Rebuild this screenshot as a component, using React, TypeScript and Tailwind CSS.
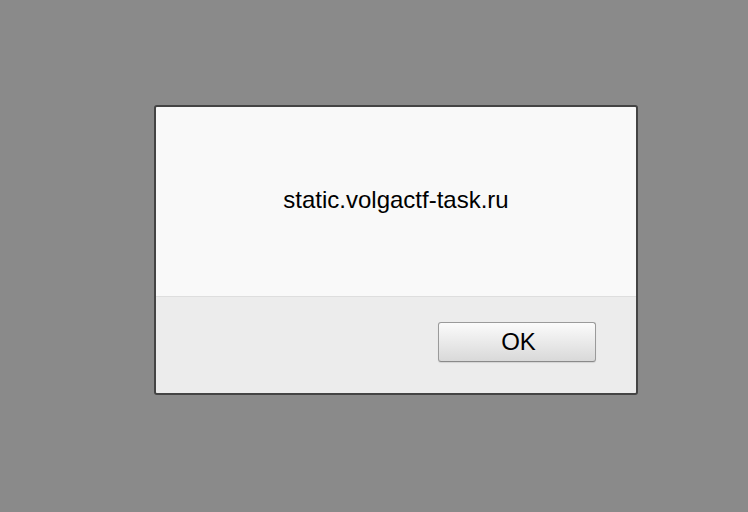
export default function App() {
  return (
    <div className="min-h-[512px] w-full bg-[#8a8a8a] pl-[154px] pt-[105px]" style={{ fontFamily: '"Liberation Sans", Arial, sans-serif' }}>
      <div className="w-[484px] h-[290px] rounded-[3px] border-2 border-[#444] overflow-hidden flex flex-col">
        {/* Message */}
        <div className="h-[190px] bg-[#f9f9f9] border-b border-[#dedede] flex items-center justify-center">
          <p className="text-[24px] text-black pb-[4px]">static.volgactf-task.ru</p>
        </div>

        {/* Actions */}
        <div className="flex-1 bg-[#ececec] flex justify-end items-start pt-[25px] pr-[40px]">
          <button className="w-[158px] h-[40px] rounded-[3px] border border-[#9a9a9a] border-b-[#8a8a8a] bg-gradient-to-b from-[#fbfbfb] to-[#d9d9d9] text-[24px] text-black leading-none pl-[3px] shadow-[0_1px_1px_rgba(0,0,0,0.1)]">
            OK
          </button>
        </div>
      </div>
    </div>
  );
}
